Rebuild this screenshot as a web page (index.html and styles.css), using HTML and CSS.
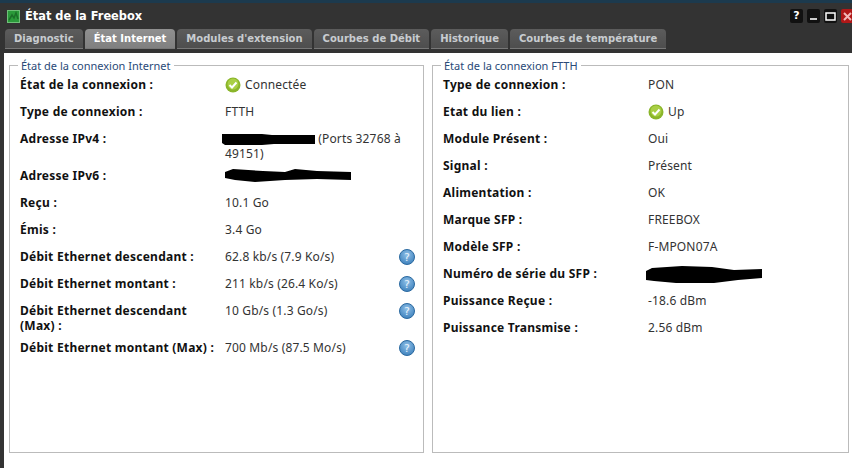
FILE: index.html
```html
<!DOCTYPE html>
<html lang="fr">
<head>
<meta charset="utf-8">
<title>État de la Freebox</title>
<link rel="stylesheet" href="styles.css">
</head>
<body>
<svg class="defs" width="0" height="0"><defs><radialGradient id="hg" cx="50%" cy="35%" r="65%"><stop offset="0" stop-color="#8fc0e8"/><stop offset="1" stop-color="#3f82bd"/></radialGradient></defs></svg>
<div class="desktop-strip"></div>
<div class="window">
  <header class="titlebar">
    <svg class="app-icon" width="13" height="13" viewBox="0 0 13 13"><rect width="13" height="13" fill="#6fbf78"/><rect x="1" y="1" width="11" height="11" fill="#2a9a3a"/><path d="M2 10l3-5 2 3 2-5 2 6" stroke="#1a6f28" stroke-width="1.5" fill="none"/></svg>
    <h1 class="title">État de la Freebox</h1>
    <div class="win-buttons">
      <span class="win-btn">?</span>
      <span class="win-btn"><svg width="9" height="9" viewBox="0 0 9 9"><rect x="1" y="6" width="7" height="2" fill="#ccc"/></svg></span>
      <span class="win-btn"><svg width="11" height="9" viewBox="0 0 11 9"><rect x="1" y="1" width="9" height="7" fill="none" stroke="#fff" stroke-width="1.5"/></svg></span>
      <span class="win-btn close"><svg width="9" height="9" viewBox="0 0 9 9"><path d="M1 1l7 7M8 1l-7 7" stroke="#f2b8b8" stroke-width="2"/></svg></span>
    </div>
  </header>
  <nav class="tabs">
    <span class="tab">Diagnostic</span>
    <span class="tab active">État Internet</span>
    <span class="tab">Modules d'extension</span>
    <span class="tab">Courbes de Débit</span>
    <span class="tab">Historique</span>
    <span class="tab">Courbes de température</span>
  </nav>
  <main class="content">
    <section class="panel left">
      <h2 class="legend">État de la connexion Internet</h2>
      <div class="row"><b>État de la connexion :</b><span class="val"><svg class="ok" width="16" height="16" viewBox="0 0 16 16"><circle cx="8" cy="8" r="7.5" fill="#8ab52a"/><circle cx="8" cy="7" r="5.5" fill="#a9cf45"/><path d="M4.5 8l2.5 2.5L11.5 5.5" stroke="#fff" stroke-width="2" fill="none"/></svg>Connectée</span></div>
      <div class="row"><b>Type de connexion :</b><span class="val">FTTH</span></div>
      <div class="row tall"><b>Adresse IPv4 :</b><span class="val"><svg class="mask ipv4" width="93" height="12" viewBox="0 0 93 12"><path d="M0 1h40l10 1h43v9H52l-12 1H3l-3-2z"/></svg> (Ports 32768 à 49151)</span></div>
      <div class="row"><b>Adresse IPv6 :</b><span class="val"><svg class="mask" width="126" height="14" viewBox="0 0 126 14"><path d="M0 4l8-3 30 2 22 1 10-3 22 2 34 1v8l-34-1-32 1-30 2-20-2-10-2z"/></svg></span></div>
      <div class="row"><b>Reçu :</b><span class="val">10.1 Go</span></div>
      <div class="row"><b>Émis :</b><span class="val">3.4 Go</span></div>
      <div class="row"><b>Débit Ethernet descendant :</b><span class="val">62.8 kb/s (7.9 Ko/s)</span><svg class="help" width="16" height="16" viewBox="0 0 16 16"><circle cx="8" cy="8" r="7.5" fill="url(#hg)" stroke="#2c6aa0"/><text x="8" y="12" text-anchor="middle" class="help-mark">?</text></svg></div>
      <div class="row"><b>Débit Ethernet montant :</b><span class="val">211 kb/s (26.4 Ko/s)</span><svg class="help" width="16" height="16" viewBox="0 0 16 16"><circle cx="8" cy="8" r="7.5" fill="url(#hg)" stroke="#2c6aa0"/><text x="8" y="12" text-anchor="middle" class="help-mark">?</text></svg></div>
      <div class="row tall"><b>Débit Ethernet descendant (Max) :</b><span class="val">10 Gb/s (1.3 Go/s)</span><svg class="help" width="16" height="16" viewBox="0 0 16 16"><circle cx="8" cy="8" r="7.5" fill="url(#hg)" stroke="#2c6aa0"/><text x="8" y="12" text-anchor="middle" class="help-mark">?</text></svg></div>
      <div class="row"><b>Débit Ethernet montant (Max) :</b><span class="val">700 Mb/s (87.5 Mo/s)</span><svg class="help" width="16" height="16" viewBox="0 0 16 16"><circle cx="8" cy="8" r="7.5" fill="url(#hg)" stroke="#2c6aa0"/><text x="8" y="12" text-anchor="middle" class="help-mark">?</text></svg></div>
    </section>
    <section class="panel right">
      <h2 class="legend">État de la connexion FTTH</h2>
      <div class="row"><b>Type de connexion :</b><span class="val">PON</span></div>
      <div class="row"><b>Etat du lien :</b><span class="val"><svg class="ok" width="16" height="16" viewBox="0 0 16 16"><circle cx="8" cy="8" r="7.5" fill="#8ab52a"/><circle cx="8" cy="7" r="5.5" fill="#a9cf45"/><path d="M4.5 8l2.5 2.5L11.5 5.5" stroke="#fff" stroke-width="2" fill="none"/></svg>Up</span></div>
      <div class="row"><b>Module Présent :</b><span class="val">Oui</span></div>
      <div class="row"><b>Signal :</b><span class="val">Présent</span></div>
      <div class="row"><b>Alimentation :</b><span class="val">OK</span></div>
      <div class="row"><b>Marque SFP :</b><span class="val">FREEBOX</span></div>
      <div class="row"><b>Modèle SFP :</b><span class="val">F-MPON07A</span></div>
      <div class="row"><b>Numéro de série du SFP :</b><span class="val"><svg class="mask serial" width="116" height="17" viewBox="0 0 116 17"><path d="M0 5l6-3 30-2 30 1 22 3 28-1v9l-24 2-24 3H30L8 15 0 14z"/></svg></span></div>
      <div class="row"><b>Puissance Reçue :</b><span class="val">-18.6 dBm</span></div>
      <div class="row"><b>Puissance Transmise :</b><span class="val">2.56 dBm</span></div>
    </section>
  </main>
</div>
</body>
</html>
```
FILE: styles.css
```css
html, body { margin: 0; height: 100%; overflow: hidden; }
body { display: flex; flex-direction: column; background: #333; font-family: "Noto Sans", sans-serif; font-size: 12px; color: #222; }
.defs { position: absolute; }
.desktop-strip { height: 3px; background: #1c3a4e; flex: none; }
.window { flex: 1; display: flex; flex-direction: column; background: #333; min-height: 0; }
.titlebar { display: flex; align-items: center; height: 26px; padding-left: 7px; flex: none; }
.app-icon { margin-right: 5px; }
.title { margin: 0; font-family: "DejaVu Sans", sans-serif; font-size: 11.4px; font-weight: bold; color: #fff; }
.win-buttons { margin-left: auto; display: flex; gap: 4px; margin-right: -2px; }
.win-btn { width: 13px; height: 14px; background: #111; border-radius: 2px; color: #fff; font-family: "DejaVu Sans", sans-serif; font-weight: bold; font-size: 11px; line-height: 14px; display: flex; align-items: center; justify-content: center; flex: none; }
.win-btn.close { background: #b01818; }
.tabs { display: flex; gap: 2px; padding-left: 5px; height: 20px; flex: none; }
.tab { display: flex; align-items: center; padding: 0 9px; background: linear-gradient(#5c5c5c, #4e4e4e); color: #c8ccd0; font-family: "DejaVu Sans", sans-serif; font-size: 10px; font-weight: bold; border-radius: 4px 4px 0 0; border-bottom: 1px solid #777; box-sizing: border-box; white-space: nowrap; }
.tab.active { background: linear-gradient(#909090, #808080); color: #fff; }
.content { flex: 1; margin: 4px 0 0 4px; background: #fff; display: flex; gap: 8px; padding: 12px 3px 15px 5px; min-height: 0; }
.panel { flex: none; border: 1px solid #bbb; box-sizing: border-box; position: relative; padding: 11px 8px 0 10px; }
.panel.left { width: 415px; }
.panel.right { width: 417px; }
.legend { position: absolute; top: -8px; left: 8px; margin: 0; padding: 0 3px; background: #fff; font-size: 11px; font-weight: normal; color: #2a4a78; line-height: 15px; }
.row { display: grid; grid-template-columns: 205px 1fr; align-items: start; min-height: 27px; position: relative; line-height: 15px; }
.row.tall { min-height: 37px; }
.row b { font-size: 12px; letter-spacing: .25px; color: #111; }
.val { font-size: 12px; letter-spacing: .15px; color: #333; padding-right: 8px; }
.ok { vertical-align: -4px; margin-right: 4px; }
.mask { fill: #000; vertical-align: -2px; }
.mask.ipv4 { margin-left: -3px; }
.mask.serial { margin-left: -2px; }
.help { position: absolute; right: 0; top: 0; }
.help-mark { font-family: "DejaVu Sans", sans-serif; font-size: 11px; fill: #e8f2fb; }
```
